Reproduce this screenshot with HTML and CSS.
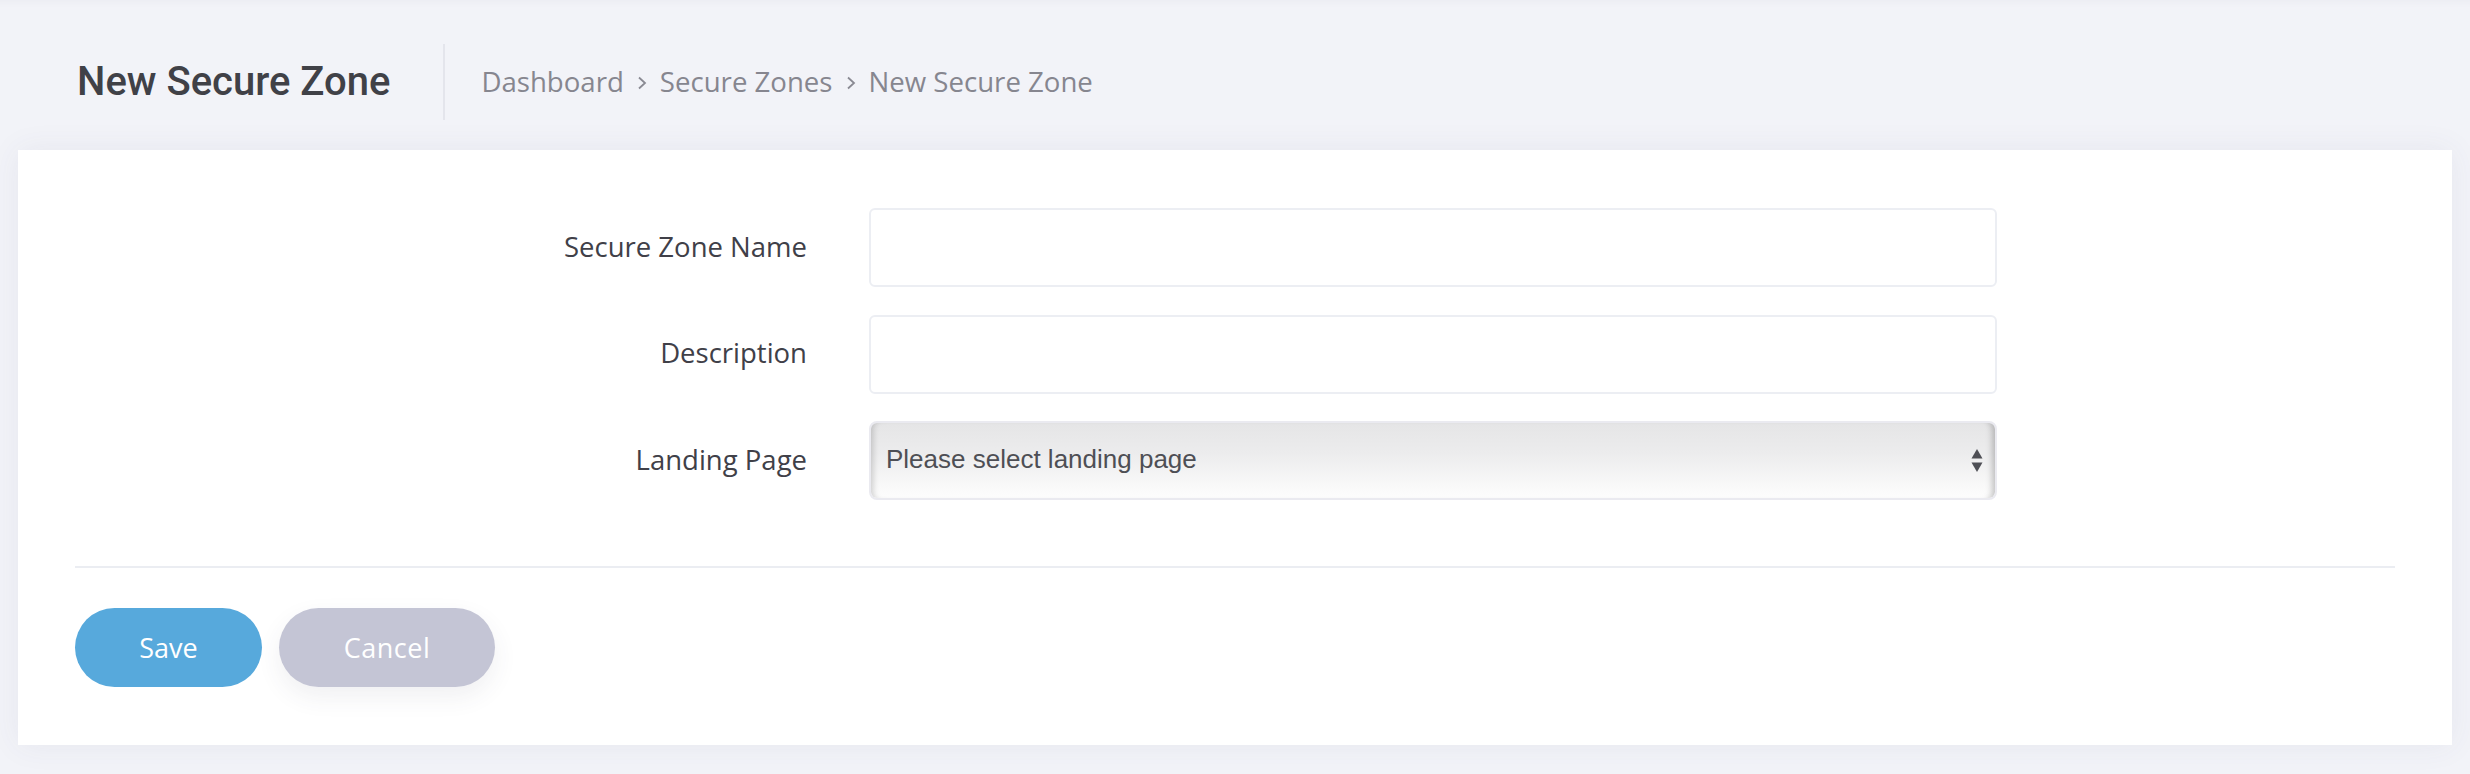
FILE: index.html
```html
<!DOCTYPE html>
<html lang="en">
<head>
<meta charset="utf-8">
<title>New Secure Zone</title>
<link rel="stylesheet" href="styles.css">
</head>
<body>
<header class="subheader">
  <h3 class="title">New Secure Zone</h3>
  <span class="divider"></span>
  <nav class="crumbs">
    <a class="crumb">Dashboard</a>
    <svg class="chev" viewBox="0 0 10 14" width="10" height="14"><polyline points="2,1.5 8,7 2,12.5" fill="none" stroke="#8a8a93" stroke-width="1.8"/></svg>
    <a class="crumb">Secure Zones</a>
    <svg class="chev" viewBox="0 0 10 14" width="10" height="14"><polyline points="2,1.5 8,7 2,12.5" fill="none" stroke="#8a8a93" stroke-width="1.8"/></svg>
    <a class="crumb">New Secure Zone</a>
  </nav>
</header>
<main class="card">
  <form class="form">
    <div class="row">
      <label class="label">Secure Zone Name</label>
      <input class="control" type="text">
    </div>
    <div class="row">
      <label class="label">Description</label>
      <input class="control" type="text">
    </div>
    <div class="row">
      <label class="label">Landing Page</label>
      <div class="select">
        <span class="select-text">Please select landing page</span>
        <svg class="arrows" viewBox="0 0 12 26" width="12" height="26">
          <polygon points="6,1 11.5,10.5 0.5,10.5" fill="#4e4f55"/>
          <polygon points="0.5,14.5 11.5,14.5 6,24" fill="#4e4f55"/>
        </svg>
      </div>
    </div>
  </form>
  <div class="separator"></div>
  <div class="actions">
    <button class="btn btn-save" type="button">Save</button>
    <button class="btn btn-cancel" type="button">Cancel</button>
  </div>
</main>
</body>
</html>
```
FILE: styles.css
```css
html, body {
  margin: 0;
  padding: 0;
}
body {
  background: #f2f3f8;
  font-family: "Open Sans", "Liberation Sans", sans-serif;
  height: 774px;
  overflow: hidden;
}
.subheader {
  height: 150px;
  box-sizing: border-box;
  padding: 14px 0 0 77px;
  display: flex;
  align-items: center;
  box-shadow: inset 0 10px 10px -10px rgba(60, 60, 90, 0.06);
}
.title {
  margin: 0;
  font-family: Roboto, "Liberation Sans", sans-serif;
  font-weight: 500;
  font-size: 40px;
  line-height: 1;
  color: #404147;
}
.divider {
  width: 2px;
  height: 76px;
  background: #e4e5ec;
  margin-left: 53px;
  margin-right: 36px;
}
.crumbs {
  display: flex;
  align-items: center;
}
.crumb {
  font-size: 27.6px;
  color: #86868f;
  line-height: 1;
}
.chev {
  margin: 2px 13px 0 13px;
}
.card {
  margin: 0 18px;
  background: #ffffff;
  padding: 58px 57px 58px 57px;
  box-shadow: 0 0 30px 0 rgba(70, 70, 110, 0.07);
}
.form {
  display: flex;
  flex-direction: column;
  gap: 27.5px;
}
.row {
  display: flex;
  align-items: center;
  height: 79px;
}
.label {
  width: 732px;
  text-align: right;
  font-size: 27.5px;
  color: #404048;
  margin-right: 62px;
  line-height: 1;
  margin-top: -2px;
}
.control {
  width: 1128px;
  height: 79px;
  box-sizing: border-box;
  border: 2px solid #eceef3;
  border-radius: 6px;
  background: #fff;
  margin: 0;
  padding: 0 16px;
  font-size: 26px;
  outline: none;
}
.select {
  width: 1128px;
  height: 79px;
  box-sizing: border-box;
  border: 2px solid #eaeaf0;
  border-radius: 8px;
  background: linear-gradient(#e5e5e6 0%, #ececed 40%, #f9f9f9 85%, #fdfdfd 100%);
  box-shadow: inset 7px 0 6px -5px rgba(0, 0, 0, 0.18), inset -8px 0 6px -5px rgba(0, 0, 0, 0.22);
  display: flex;
  align-items: center;
  justify-content: space-between;
  padding: 0 12px 0 15px;
}
.select-text {
  font-family: "Liberation Sans", Arial, sans-serif;
  font-size: 26px;
  color: #4e4f55;
  line-height: 1;
  margin-top: -3px;
}
.separator {
  height: 2px;
  background: #ebedf2;
  margin-top: 66px;
}
.actions {
  display: flex;
  gap: 17px;
  margin-top: 40px;
}
.btn {
  height: 79px;
  border: none;
  border-radius: 40px;
  color: #ffffff;
  font-family: "Open Sans", "Liberation Sans", sans-serif;
  font-size: 27px;
  padding: 0;
  cursor: pointer;
}
.btn-save {
  width: 187px;
  background: #57a9dc;
}
.btn-cancel {
  width: 216px;
  background: #c4c5d5;
  letter-spacing: 0.5px;
  box-shadow: 0 10px 24px rgba(60, 60, 90, 0.08);
}
```
